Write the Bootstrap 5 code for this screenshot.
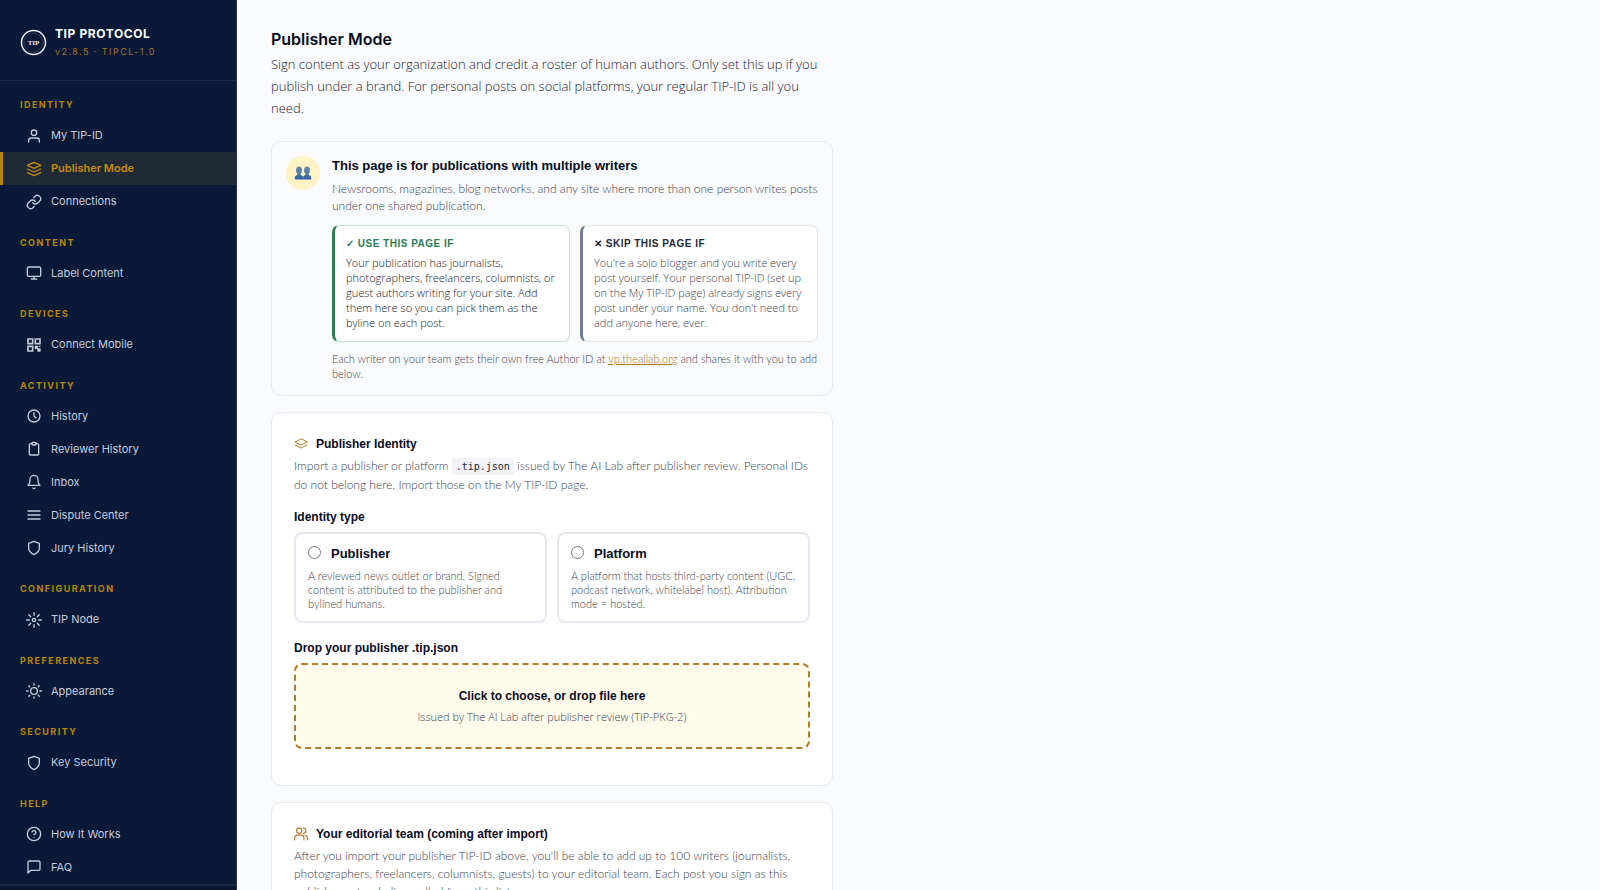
<!DOCTYPE html>
<html lang="en">
<head>
<meta charset="utf-8">
<meta name="viewport" content="width=device-width, initial-scale=1">
<title>Publisher Mode</title>
<link rel="stylesheet" href="https://cdn.jsdelivr.net/npm/bootstrap@5.3.0/dist/css/bootstrap.min.css">
<style>
  :root { --navy: #0b1939; --gold: #b8860b; --bronze: #b07d2b; --ink: #070b1f; --muted: #3c4254; --line: #e5e9ef; }
  body { font-family: "Liberation Sans", Arial, sans-serif; background: #f9fafc; color: var(--ink); font-size: 12px; line-height: 17px; }
  svg { flex: none; fill: none; stroke: currentColor; stroke-width: 2; stroke-linecap: round; stroke-linejoin: round; }

  .side { width: 237px; background: var(--navy); border-right: 1px solid #2a3654; font-family: Inter, "Liberation Sans", sans-serif; }
  .brand { height: 81px; padding: 5px 20px 0; border-bottom: 1px solid #1f2c4c; }
  .brand-logo { color: #e8ecf4; }
  .brand-name { font-size: 12px; line-height: 18px; font-weight: 700; letter-spacing: .05em; color: #fff; }
  .brand-version { font-size: 9px; line-height: 18px; letter-spacing: .16em; color: #a8722a; }
  .side-label { font-size: 9px; line-height: 14px; font-weight: 700; letter-spacing: .16em; color: var(--gold); padding: 17px 20px 7px; margin: 0; text-transform: uppercase; }
  .side-link { height: 33px; gap: 9px; padding-left: 23px; border-left: 3px solid transparent; color: #c3ccdb; font-size: 11px; text-decoration: none; }
  .side-link.active { background: #202a37; border-color: var(--gold); color: #c48a0c; font-weight: 600; }
  .side-foot { height: 6px; border-top: 2px solid #18264a; background: #0a1530; }

  .page { padding: 27px 34px; }
  .column { max-width: 562px; }
  h1 { font-family: Inter, sans-serif; font-size: 16px; line-height: 24px; font-weight: 600; margin: 0 0 2px; }
  h2 { font-size: 13px; line-height: 20px; font-weight: 600; margin: 0; }
  h3 { font-size: 12px; line-height: 20px; font-weight: 600; margin: 0; }
  .intro, .light { font-weight: 300; margin: 0; }
  .intro { font-family: "Open Sans", sans-serif; font-size: 13px; line-height: 22px; color: #1c2133; margin-bottom: 22px; }
  .light { font-family: Lato, "Open Sans", sans-serif; color: var(--muted); }
  .panel { background: #fff; border: 1px solid var(--line); border-radius: 10px; padding: 21px 22px 36px; margin-bottom: 16px; }
  .panel-title { gap: 8px; margin-bottom: 3px; }
  .panel-title svg { color: var(--bronze); }
  .panel-text { line-height: 18px; margin-bottom: 13px; }
  .panel a { color: #a8751c; }
  .notice { background: #f9fafc; padding: 14px; gap: 12px; }
  .avatar-dot { width: 34px; height: 34px; background: #fdf3c4; }
  .pair { display: grid; grid-template-columns: 1fr 1fr; gap: 10px; }
  .notice .pair { margin-top: 11px; }
  .fit { background: #fff; border: 1px solid #dde6ea; border-left: 3px solid #718096; border-radius: 7px; padding: 10px 11px 11px; font-size: 11px; line-height: 15px; }
  .fit .light { font-family: "Open Sans", sans-serif; }
  .fit.yes { border-color: #c5dfd3; border-left-color: #2a7d55; }
  .fit h3 { font-size: 10px; line-height: 15px; letter-spacing: .05em; margin-bottom: 4px; color: #23283a; }
  .fit.yes h3 { color: #2a7d55; }
  .fit.yes .light { color: #11162a; }
  .fineprint { font-size: 11px; line-height: 15px; margin-top: 9px; }
  code { font-family: "DejaVu Sans Mono", monospace; font-size: 10px; color: #23283a; background: #f2f3f7; padding: 3px 4px; border-radius: 3px; }
  .choice { border: 2px solid var(--line); border-radius: 8px; padding: 11px 12px 10px; cursor: pointer; }
  .choice input { width: 13px; height: 13px; margin: 0 0 3px; }
  .choice-name { gap: 10px; font-size: 13px; line-height: 18px; font-weight: 600; margin-bottom: 6px; }
  .choice .light { font-size: 11px; line-height: 14px; }
  .field-title { margin-bottom: 5px; }
  .pair + .field-title { margin-top: 15px; }
  .drop { background: #fffbeb; border: 2px dashed var(--bronze); border-radius: 8px; height: 86px; color: var(--ink); }
  .drop-title { font-size: 12px; line-height: 22px; font-weight: 600; }
  .drop .light { font-family: "Open Sans", sans-serif; font-size: 11px; line-height: 20px; }
</style>
</head>
<body>
<div class="d-flex align-items-start">
  <nav class="side position-sticky top-0 vh-100 flex-shrink-0 d-flex flex-column" aria-label="Main">
    <div class="brand d-flex align-items-center">
      <svg class="brand-logo me-2" width="27" height="27" viewBox="0 0 27 27"><circle cx="13.500" cy="13.500" r="12" stroke-width="1.500"/><circle cx="13.500" cy="13.500" r="9.500" stroke="#2a3654" stroke-width="1"/><text x="13.500" y="16" text-anchor="middle" font-family="Liberation Serif" font-size="7" font-weight="700" fill="currentColor" stroke="none">TIP</text></svg>
      <div>
        <div class="brand-name">TIP PROTOCOL</div>
        <div class="brand-version">v2.8.5 · TIPCL-1.0</div>
      </div>
    </div>
    <div class="flex-grow-1 d-flex flex-column justify-content-between">
      <div>
        <p class="side-label">Identity</p>
        <a class="side-link d-flex align-items-center" href="#"><svg width="16" height="16" viewBox="0 0 24 24"><path d="M20 21v-2a4 4 0 0 0-4-4H8a4 4 0 0 0-4 4v2"/><circle cx="12" cy="7" r="4"/></svg>My TIP-ID</a>
        <a class="side-link active d-flex align-items-center" href="#" aria-current="page"><svg width="16" height="16" viewBox="0 0 24 24"><path d="M12 2 2 6.500l10 4.500 10-4.500zM2 12l10 4.500L22 12M2 17.500 12 22l10-4.500"/></svg>Publisher Mode</a>
        <a class="side-link d-flex align-items-center" href="#"><svg width="16" height="16" viewBox="0 0 24 24"><path d="M10 13a5 5 0 0 0 7.540.54l3-3a5 5 0 0 0-7.070-7.070l-1.720 1.710"/><path d="M14 11a5 5 0 0 0-7.540-.54l-3 3a5 5 0 0 0 7.070 7.070l1.710-1.710"/></svg>Connections</a>
      </div>
      <div>
        <p class="side-label">Content</p>
        <a class="side-link d-flex align-items-center" href="#"><svg width="16" height="16" viewBox="0 0 24 24"><rect x="2" y="3" width="20" height="14" rx="2"/><path d="M8 21h8M12 17v4"/></svg>Label Content</a>
      </div>
      <div>
        <p class="side-label">Devices</p>
        <a class="side-link d-flex align-items-center" href="#"><svg width="16" height="16" viewBox="0 0 24 24"><path stroke-linejoin="miter" stroke-width="2.500" d="M3 3h7v7H3zM14 3h7v7h-7zM3 14h7v7H3z"/><path d="M14 14h3v3h-3zM18 18h3v3h-3zM20 14h1" fill="currentColor"/></svg>Connect Mobile</a>
      </div>
      <div>
        <p class="side-label">Activity</p>
        <a class="side-link d-flex align-items-center" href="#"><svg width="16" height="16" viewBox="0 0 24 24"><circle cx="12" cy="12" r="9"/><path d="M12 7v5l3 3"/></svg>History</a>
        <a class="side-link d-flex align-items-center" href="#"><svg width="16" height="16" viewBox="0 0 24 24"><path d="M15 4h2a2 2 0 0 1 2 2v13a2 2 0 0 1-2 2H7a2 2 0 0 1-2-2V6a2 2 0 0 1 2-2h2"/><rect x="9" y="2" width="6" height="4" rx="1"/></svg>Reviewer History</a>
        <a class="side-link d-flex align-items-center" href="#"><svg width="16" height="16" viewBox="0 0 24 24"><path d="M18 8A6 6 0 0 0 6 8c0 7-3 9-3 9h18s-3-2-3-9M13.730 21a2 2 0 0 1-3.460 0"/></svg>Inbox</a>
        <a class="side-link d-flex align-items-center" href="#"><svg width="16" height="16" viewBox="0 0 24 24"><path d="M3 6h18M3 12h18M3 18h18"/></svg>Dispute Center</a>
        <a class="side-link d-flex align-items-center" href="#"><svg width="16" height="16" viewBox="0 0 24 24"><path d="M12 22s8-4 8-10V5l-8-3-8 3v7c0 6 8 10 8 10z"/></svg>Jury History</a>
      </div>
      <div>
        <p class="side-label">Configuration</p>
        <a class="side-link d-flex align-items-center" href="#"><svg width="16" height="16" viewBox="0 0 24 24"><circle cx="12" cy="12" r="2.500"/><path d="M12 1v4M12 19v4M1 12h4M19 12h4M4.200 4.200l2.900 2.900M16.900 16.900l2.900 2.900M4.200 19.800l2.900-2.900M16.900 7.100l2.900-2.900"/></svg>TIP Node</a>
      </div>
      <div>
        <p class="side-label">Preferences</p>
        <a class="side-link d-flex align-items-center" href="#"><svg width="16" height="16" viewBox="0 0 24 24"><circle cx="12" cy="12" r="5"/><path d="M12 1v2M12 21v2M1 12h2M21 12h2M4.200 4.200l1.400 1.400M18.400 18.400l1.400 1.400M4.200 19.800l1.400-1.400M18.400 5.600l1.400-1.400"/></svg>Appearance</a>
      </div>
      <div>
        <p class="side-label">Security</p>
        <a class="side-link d-flex align-items-center" href="#"><svg width="16" height="16" viewBox="0 0 24 24"><path d="M12 22s8-4 8-10V5l-8-3-8 3v7c0 6 8 10 8 10z"/></svg>Key Security</a>
      </div>
      <div>
        <p class="side-label">Help</p>
        <a class="side-link d-flex align-items-center" href="#"><svg width="16" height="16" viewBox="0 0 24 24"><circle cx="12" cy="12" r="10"/><path d="M9.090 9a3 3 0 0 1 5.830 1c0 2-3 3-3 3M12 17h.01"/></svg>How It Works</a>
        <a class="side-link d-flex align-items-center" href="#"><svg width="16" height="16" viewBox="0 0 24 24"><path d="M21 15a2 2 0 0 1-2 2H7l-4 4V5a2 2 0 0 1 2-2h14a2 2 0 0 1 2 2z"/></svg>FAQ</a>
      </div>
    </div>
    <div class="side-foot"></div>
  </nav>

  <main class="page flex-grow-1">
    <div class="column">
      <h1>Publisher Mode</h1>
      <p class="intro">Sign content as your organization and credit a roster of human authors. Only set this up if you publish under a brand. For personal posts on social platforms, your regular TIP-ID is all you need.</p>

      <section class="panel notice d-flex align-items-start">
        <div class="avatar-dot rounded-circle d-flex align-items-center justify-content-center flex-shrink-0">
          <svg width="18" height="16" viewBox="0 0 18 16" role="img" aria-label="Writers"><defs><linearGradient id="bust" x1="0" y1="0" x2="0" y2="1"><stop offset="0" stop-color="#6f8fa6"/><stop offset="1" stop-color="#2b62a3"/></linearGradient></defs><g fill="url(#bust)" stroke="none"><path d="M5 1.500c2 0 3 1.500 3 3.400 0 1.700-.6 3-1.400 3.700v1.200c1.100.6 2.400.9 2.400 2.600V14.500H.800v-2.100c0-1.700 1.500-2 2.600-2.600V8.600C2.600 7.900 2 6.600 2 4.900 2 3 3 1.500 5 1.500z"/><path d="M13 1.500c2 0 3 1.500 3 3.400 0 1.700-.6 3-1.400 3.700v1.200c1.100.6 2.600.9 2.600 2.600V14.500H9.100v-2.100c0-1.700 1.300-2 2.400-2.600V8.600c-.9-.7-1.500-2-1.500-3.700 0-1.900 1-3.400 3-3.400z"/></g></svg>
        </div>
        <div>
          <h2 class="mb-1">This page is for publications with multiple writers</h2>
          <p class="light">Newsrooms, magazines, blog networks, and any site where more than one person writes posts under one shared publication.</p>
          <div class="pair">
            <div class="fit yes">
              <h3>✓ USE THIS PAGE IF</h3>
              <p class="light">Your publication has journalists, photographers, freelancers, columnists, or guest authors writing for your site. Add them here so you can pick them as the byline on each post.</p>
            </div>
            <div class="fit">
              <h3>✕ SKIP THIS PAGE IF</h3>
              <p class="light">You're a solo blogger and you write every post yourself. Your personal TIP-ID (set up on the My TIP-ID page) already signs every post under your name. You don't need to add anyone here, ever.</p>
            </div>
          </div>
          <p class="light fineprint">Each writer on your team gets their own free Author ID at <a href="#">vp.theailab.org</a> and shares it with you to add below.</p>
        </div>
      </section>

      <section class="panel">
        <h3 class="panel-title d-flex align-items-center"><svg width="14" height="14" viewBox="0 0 14 14"><path stroke-width="1" d="M7 2 1 5l6 3 6-3zM1 8l6 3 6-3"/></svg>Publisher Identity</h3>
        <p class="light panel-text">Import a publisher or platform <code>.tip.json</code> issued by The AI Lab after publisher review. Personal IDs do not belong here. Import those on the My TIP-ID page.</p>
        <h3 class="field-title" id="type-title">Identity type</h3>
        <div class="pair" role="radiogroup" aria-labelledby="type-title">
          <label class="choice">
            <span class="choice-name d-flex align-items-center"><input type="radio" name="kind" value="publisher">Publisher</span>
            <span class="light d-block">A reviewed news outlet or brand. Signed content is attributed to the publisher and bylined humans.</span>
          </label>
          <label class="choice">
            <span class="choice-name d-flex align-items-center"><input type="radio" name="kind" value="platform">Platform</span>
            <span class="light d-block">A platform that hosts third-party content (UGC, podcast network, whitelabel host). Attribution mode = hosted.</span>
          </label>
        </div>
        <h3 class="field-title">Drop your publisher .tip.json</h3>
        <button type="button" class="drop w-100 d-flex flex-column align-items-center justify-content-center p-0">
          <span class="drop-title">Click to choose, or drop file here</span>
          <span class="light">Issued by The AI Lab after publisher review (TIP-PKG-2)</span>
        </button>
      </section>

      <section class="panel mb-0">
        <h3 class="panel-title d-flex align-items-center"><svg width="14" height="14" viewBox="0 0 24 24"><path d="M17 22v-3a5 5 0 0 0-5-5H6a5 5 0 0 0-5 5v3M23 22v-3a5 5 0 0 0-4-4.800M16 2a4.500 4.500 0 0 1 0 9"/><circle cx="9" cy="6.500" r="4.500"/></svg>Your editorial team (coming after import)</h3>
        <p class="light panel-text mb-0">After you import your publisher TIP-ID above, you'll be able to add up to 100 writers (journalists, photographers, freelancers, columnists, guests) to your editorial team. Each post you sign as this publisher gets a byline pulled from this list.</p>
      </section>
    </div>
  </main>
</div>
<script src="https://cdn.jsdelivr.net/npm/bootstrap@5.3.0/dist/js/bootstrap.bundle.min.js"></script>
</body>
</html>
